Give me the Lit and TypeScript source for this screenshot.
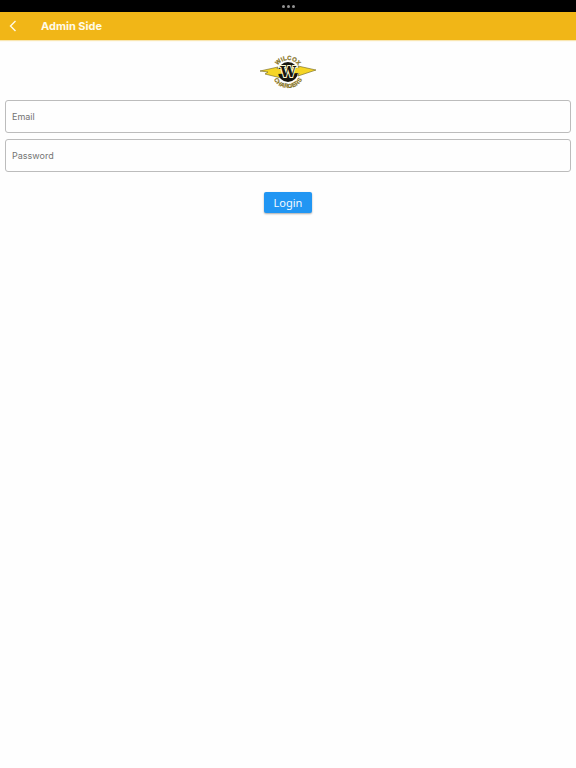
import { LitElement, html, css } from "lit";
import { customElement } from "lit/decorators.js";

@customElement("school-logo")
class SchoolLogo extends LitElement {
  static styles = css`
    :host {
      display: block;
      width: 56px;
      height: 34px;
    }
    svg {
      display: block;
    }
    .ring {
      font: 700 6px "Liberation Sans", sans-serif;
      fill: #9c841c;
      stroke: #5f5314;
      stroke-width: 0.2;
      text-anchor: middle;
    }
    .initial {
      font: 700 14px "DejaVu Serif", serif;
      fill: #17160f;
      stroke: #fdf9cf;
      stroke-width: 2;
      paint-order: stroke;
      text-anchor: middle;
    }
  `;

  render() {
    return html`
      <svg width="56" height="34" viewBox="0 0 56 34" role="img" aria-label="Wilcox Chargers">
        <defs>
          <path id="top" d="M16 17A12 12 0 0 1 40 17" />
          <path id="bottom" d="M12 17A16 16 0 0 0 44 17" />
        </defs>
        <path
          d="M0 16L18 12L17 14L39 13L38 11L56 15L38 21L39 18L20 19L21 23L5 19L8 17Z"
          fill="#f5d526"
          stroke="#6b611f"
          stroke-width="0.6"
          stroke-linejoin="round"
        />
        <circle cx="28" cy="17" r="10" fill="#17160f" />
        <path d="M17 14L39 13L39 18L17 19Z" fill="#f5d526" />
        <text class="initial" x="28" y="22">W</text>
        <text class="ring"><textPath href="#top" startOffset="50%">WILCOX</textPath></text>
        <text class="ring"><textPath href="#bottom" startOffset="50%">CHARGERS</textPath></text>
      </svg>
    `;
  }
}

@customElement("app-root")
class AppRoot extends LitElement {
  static styles = css`
    :host {
      display: block;
      min-height: 100vh;
      background: #fefefe;
      font-family: Inter, "Liberation Sans", sans-serif;
    }
    .status {
      display: flex;
      align-items: center;
      justify-content: center;
      gap: 2px;
      height: 12px;
      background: #000;
    }
    .dot {
      width: 3px;
      height: 3px;
      border-radius: 50%;
      background: #929292;
    }
    .bar {
      display: flex;
      align-items: center;
      gap: 16px;
      height: 28px;
      background: #f1b617;
      box-shadow: 0 1px 1px #f1b61755;
      color: #fffbe8;
    }
    .back {
      display: flex;
      align-items: center;
      padding: 4px 8px;
      border: 0;
      background: none;
      color: inherit;
    }
    .title {
      margin: 0;
      font-size: 11px;
      line-height: 16px;
      font-weight: 700;
    }
    .form {
      display: flex;
      flex-direction: column;
      align-items: center;
      gap: 6px;
      padding: 15px 5px;
    }
    .logo {
      margin-bottom: 5px;
    }
    .field {
      box-sizing: border-box;
      width: 100%;
      height: 33px;
      padding: 0 6px;
      border: 1px solid #bcbcbc;
      border-radius: 3px;
      background: #fefefe;
      color: #222;
      font: 9px/16px Inter, sans-serif;
    }
    .field::placeholder {
      color: #747474;
      opacity: 1;
    }
    .login {
      width: 48px;
      height: 21px;
      margin-top: 14px;
      padding: 0;
      border: 0;
      border-radius: 2px;
      background: #2196f3;
      box-shadow: 0 1px 2px #00000055;
      color: #f4faff;
      font: 11px/16px "Noto Sans", sans-serif;
    }
  `;

  render() {
    return html`
      <div class="status"><i class="dot"></i><i class="dot"></i><i class="dot"></i></div>
      <header class="bar">
        <button class="back" type="button" aria-label="Back">
          <svg width="9" height="12" viewBox="0 0 9 12" fill="none" stroke="currentColor" stroke-width="1.4">
            <path d="M7.5 1L2.5 6L7.5 11" />
          </svg>
        </button>
        <h1 class="title">Admin Side</h1>
      </header>
      <form class="form">
        <school-logo class="logo"></school-logo>
        <input class="field" type="email" placeholder="Email" aria-label="Email" />
        <input class="field" type="password" placeholder="Password" aria-label="Password" />
        <button class="login" type="button">Login</button>
      </form>
    `;
  }
}
